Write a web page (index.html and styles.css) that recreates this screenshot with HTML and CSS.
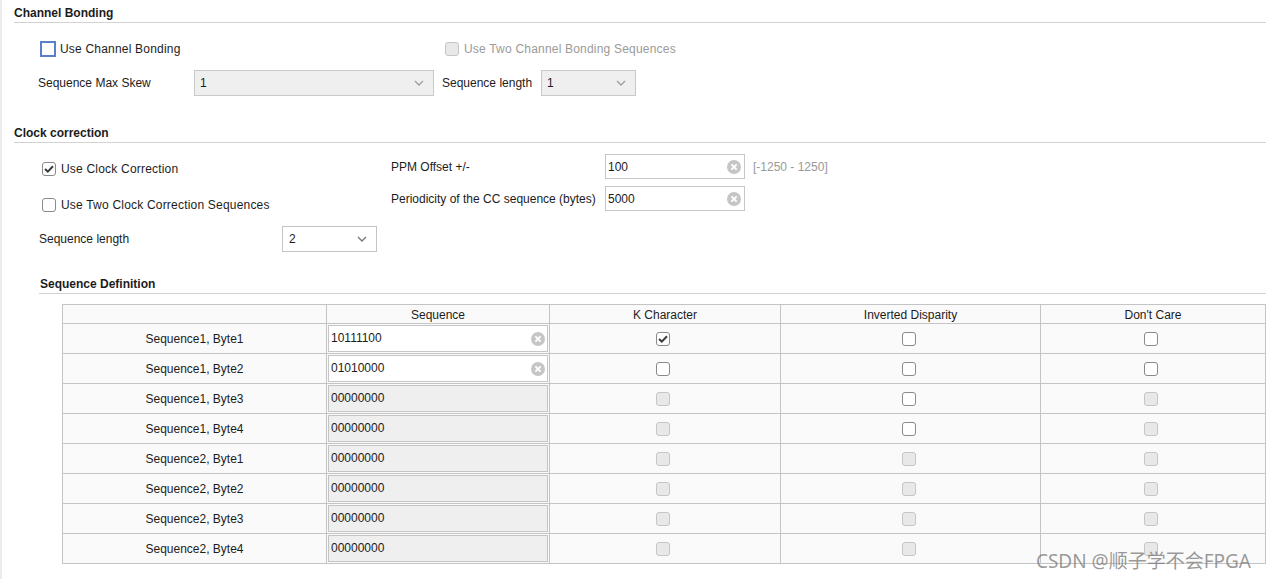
FILE: index.html
```html
<!DOCTYPE html>
<html>
<head>
<meta charset="utf-8">
<link rel="stylesheet" href="styles.css">
</head>
<body>
<div class="page">
  <section class="sec">
    <div class="sec-head">Channel Bonding</div>
    <div class="cb-row1">
      <label class="chk chk-wide"><span class="box box-focus"></span>Use Channel Bonding</label>
      <label class="chk chk-dis"><span class="box box-dis"></span>Use Two Channel Bonding Sequences</label>
    </div>
    <div class="cb-row2">
      <span class="lbl lbl-skew">Sequence Max Skew</span>
      <div class="select select-wide"><span>1</span><svg class="chev" width="10" height="6" viewBox="0 0 10 6"><path d="M1 1 L5 5 L9 1" fill="none" stroke="#a0a0a0" stroke-width="1.4"/></svg></div>
      <span class="lbl lbl-len">Sequence length</span>
      <div class="select select-small"><span>1</span><svg class="chev" width="10" height="6" viewBox="0 0 10 6"><path d="M1 1 L5 5 L9 1" fill="none" stroke="#a0a0a0" stroke-width="1.4"/></svg></div>
    </div>
  </section>

  <section class="sec sec-clock">
    <div class="sec-head">Clock correction</div>
    <div class="clock-body">
      <div class="clock-left">
        <label class="chk chk-c1"><span class="box box-on"><svg width="10" height="8" viewBox="0 0 10 8"><path d="M1 4 L3.8 6.6 L9 1.2" fill="none" stroke="#3c3c3c" stroke-width="2"/></svg></span>Use Clock Correction</label>
        <label class="chk chk-c2"><span class="box"></span>Use Two Clock Correction Sequences</label>
        <div class="len-row">
          <span class="lbl lbl-len2">Sequence length</span>
          <div class="select select-small select-light"><span>2</span><svg class="chev" width="10" height="6" viewBox="0 0 10 6"><path d="M1 1 L5 5 L9 1" fill="none" stroke="#7a7a7a" stroke-width="1.4"/></svg></div>
        </div>
      </div>
      <div class="clock-right">
        <div class="field-row">
          <span class="lbl lbl-field">PPM Offset +/-</span>
          <div class="input input-field"><span>100</span><svg class="clear" width="14" height="14" viewBox="0 0 14 14"><circle cx="7" cy="7" r="7" fill="#c6c6c6"/><path d="M4.4 4.4 L9.6 9.6 M9.6 4.4 L4.4 9.6" stroke="#fff" stroke-width="2"/></svg></div>
          <span class="hint">[-1250 - 1250]</span>
        </div>
        <div class="field-row field-row2">
          <span class="lbl lbl-field">Periodicity of the CC sequence (bytes)</span>
          <div class="input input-field"><span>5000</span><svg class="clear" width="14" height="14" viewBox="0 0 14 14"><circle cx="7" cy="7" r="7" fill="#c6c6c6"/><path d="M4.4 4.4 L9.6 9.6 M9.6 4.4 L4.4 9.6" stroke="#fff" stroke-width="2"/></svg></div>
        </div>
      </div>
    </div>
  </section>

  <section class="sec sec-def">
    <div class="sec-head sec-head-sub">Sequence Definition</div>
    <div class="seq-grid">
      <div class="cell head"></div>
      <div class="cell head">Sequence</div>
      <div class="cell head">K Character</div>
      <div class="cell head">Inverted Disparity</div>
      <div class="cell head">Don't Care</div>

      <div class="cell">Sequence1, Byte1</div>
      <div class="cell cell-in"><div class="input input-cell"><span>10111100</span><svg class="clear" width="14" height="14" viewBox="0 0 14 14"><circle cx="7" cy="7" r="7" fill="#c6c6c6"/><path d="M4.4 4.4 L9.6 9.6 M9.6 4.4 L4.4 9.6" stroke="#fff" stroke-width="2"/></svg></div></div>
      <div class="cell"><span class="box box-on"><svg width="10" height="8" viewBox="0 0 10 8"><path d="M1 4 L3.8 6.6 L9 1.2" fill="none" stroke="#3c3c3c" stroke-width="2"/></svg></span></div>
      <div class="cell"><span class="box"></span></div>
      <div class="cell"><span class="box"></span></div>

      <div class="cell">Sequence1, Byte2</div>
      <div class="cell cell-in"><div class="input input-cell"><span>01010000</span><svg class="clear" width="14" height="14" viewBox="0 0 14 14"><circle cx="7" cy="7" r="7" fill="#c6c6c6"/><path d="M4.4 4.4 L9.6 9.6 M9.6 4.4 L4.4 9.6" stroke="#fff" stroke-width="2"/></svg></div></div>
      <div class="cell"><span class="box"></span></div>
      <div class="cell"><span class="box"></span></div>
      <div class="cell"><span class="box"></span></div>

      <div class="cell">Sequence1, Byte3</div>
      <div class="cell cell-in"><div class="input input-cell input-dis"><span>00000000</span></div></div>
      <div class="cell"><span class="box box-dis"></span></div>
      <div class="cell"><span class="box"></span></div>
      <div class="cell"><span class="box box-dis"></span></div>

      <div class="cell">Sequence1, Byte4</div>
      <div class="cell cell-in"><div class="input input-cell input-dis"><span>00000000</span></div></div>
      <div class="cell"><span class="box box-dis"></span></div>
      <div class="cell"><span class="box"></span></div>
      <div class="cell"><span class="box box-dis"></span></div>

      <div class="cell">Sequence2, Byte1</div>
      <div class="cell cell-in"><div class="input input-cell input-dis"><span>00000000</span></div></div>
      <div class="cell"><span class="box box-dis"></span></div>
      <div class="cell"><span class="box box-dis"></span></div>
      <div class="cell"><span class="box box-dis"></span></div>

      <div class="cell">Sequence2, Byte2</div>
      <div class="cell cell-in"><div class="input input-cell input-dis"><span>00000000</span></div></div>
      <div class="cell"><span class="box box-dis"></span></div>
      <div class="cell"><span class="box box-dis"></span></div>
      <div class="cell"><span class="box box-dis"></span></div>

      <div class="cell">Sequence2, Byte3</div>
      <div class="cell cell-in"><div class="input input-cell input-dis"><span>00000000</span></div></div>
      <div class="cell"><span class="box box-dis"></span></div>
      <div class="cell"><span class="box box-dis"></span></div>
      <div class="cell"><span class="box box-dis"></span></div>

      <div class="cell">Sequence2, Byte4</div>
      <div class="cell cell-in"><div class="input input-cell input-dis"><span>00000000</span></div></div>
      <div class="cell"><span class="box box-dis"></span></div>
      <div class="cell"><span class="box box-dis"></span></div>
      <div class="cell"><span class="box box-dis"></span></div>
    </div>
  </section>
  <div class="watermark">CSDN @顺子学不会FPGA</div>
</div>
</body>
</html>
```

FILE: styles.css
```css
html, body {
  margin: 0;
  padding: 0;
  background: #ffffff;
}
body {
  font-family: "Liberation Sans", Arial, "Noto Sans CJK SC", sans-serif;
  font-size: 12px;
  color: #1c1c1c;
}
.page {
  position: relative;
  width: 1266px;
  height: 579px;
  border-left: 2px solid #ececec;
  padding-left: 12px;
  box-sizing: border-box;
  overflow: hidden;
}
.sec-head {
  padding-top: 6px;
  padding-bottom: 2px;
  line-height: 14px;
  font-weight: bold;
  border-bottom: 1px solid #d2d2d2;
  margin-right: -2px;
}
.sec-head-sub {
  margin-left: 25px;
  padding-left: 1px;
}
.chk {
  display: flex;
  align-items: center;
  line-height: 16px;
  letter-spacing: 0.2px;
}
.box {
  display: inline-flex;
  align-items: center;
  justify-content: center;
  box-sizing: border-box;
  width: 14px;
  height: 14px;
  border: 1px solid #8a8a8a;
  border-radius: 3px;
  background: #fff;
  flex: none;
}
.box-focus {
  width: 16px;
  height: 16px;
  border: 2px solid #5a7fcc;
  border-radius: 0;
}
.box-dis {
  border-color: #c6c6c6;
  background: #e8e8e8;
}
.chk .box { margin-right: 5px; }
.chk .box-focus { margin-right: 4px; }
.chk-dis { color: #9a9a9a; }

.cb-row1 {
  display: flex;
  margin-top: 18px;
  padding-left: 26px;
  height: 16px;
}
.chk-wide { width: 405px; }
.cb-row2 {
  display: flex;
  align-items: center;
  margin-top: 13px;
  padding-left: 24px;
  height: 26px;
}
.lbl-skew { width: 156px; }
.lbl-len { width: 99px; }

.select {
  box-sizing: border-box;
  height: 26px;
  display: flex;
  align-items: center;
  justify-content: space-between;
  padding-left: 5px;
  padding-right: 9px;
  background: #efefef;
  border: 1px solid #c9c9c9;
  flex: none;
}
.select-light { background: #fff; border-color: #c4c4c4; padding-left: 6px; }
.select-wide { width: 240px; margin-right: 8px; }
.select-small { width: 95px; }

.sec-clock { margin-top: 24px; }
.clock-body { display: flex; }
.clock-left {
  width: 377px;
  padding-left: 25px;
  box-sizing: border-box;
  display: flex;
  flex-direction: column;
  flex: none;
}
.chk-c1 { margin-top: 18px; padding-left: 3px; }
.chk-c2 { margin-top: 20px; padding-left: 3px; }
.len-row {
  display: flex;
  align-items: center;
  margin-top: 13px;
  height: 26px;
}
.lbl-len2 { width: 243px; flex: none; }

.clock-right {
  display: flex;
  flex-direction: column;
  padding-top: 11px;
}
.field-row {
  display: flex;
  align-items: center;
  height: 25px;
}
.field-row2 { margin-top: 7px; }
.lbl-field { width: 214px; flex: none; }
.input {
  box-sizing: border-box;
  display: flex;
  align-items: center;
  justify-content: space-between;
  background: #fff;
  border: 1px solid #c6c6c6;
  padding-left: 2px;
  padding-right: 2px;
}
.input-field { width: 140px; height: 25px; padding-right: 3px; }
.hint { margin-left: 8px; color: #999; }

.sec-def { margin-top: 19px; }
.seq-grid {
  margin-top: 10px;
  margin-left: 48px;
  width: 1204px;
  display: grid;
  grid-template-columns: 264px 223px 231px 260px 225px;
  grid-template-rows: 19px repeat(8, 30px);
  border-top: 1px solid #c4c4c4;
  border-left: 1px solid #c4c4c4;
  box-sizing: border-box;
  background: #fafafa;
}
.cell {
  box-sizing: border-box;
  border-right: 1px solid #c4c4c4;
  border-bottom: 1px solid #c4c4c4;
  display: flex;
  align-items: center;
  justify-content: center;
}
.cell .box { margin-right: 4px; }
.cell.head { padding-top: 1px; }
.cell-in {
  padding: 1px;
  align-items: stretch;
}
.input-cell {
  width: 100%;
  align-items: flex-start;
  padding-top: 5px;
  padding-left: 2px;
}
.input-cell .clear { margin-top: 1px; }
.input-dis { background: #efefef; border-color: #c4c4c4; }

.watermark {
  position: absolute;
  right: 15px;
  bottom: 5px;
  font-family: "Noto Sans", "Noto Sans CJK SC", sans-serif;
  font-size: 19px;
  color: rgba(110, 110, 110, 0.7);
}
```
